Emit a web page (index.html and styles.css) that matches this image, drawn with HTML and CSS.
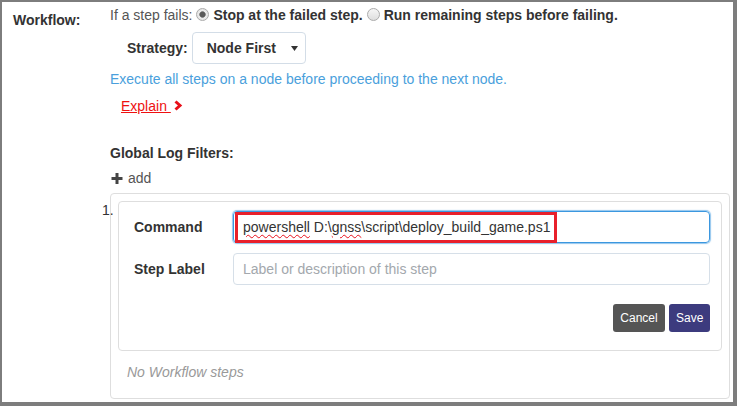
FILE: index.html
```html
<!DOCTYPE html>
<html lang="en">
<head>
<meta charset="utf-8">
<title>Workflow</title>
<link rel="stylesheet" href="styles.css">
</head>
<body>
<div class="frame">
  <div class="form-row">
    <div class="label-col"><span class="ctrl-label">Workflow:</span></div>
    <div class="content-col">
      <div class="fail-line">If a step fails: <span class="radio checked"></span><b>Stop at the failed step.</b> <span class="radio"></span><b>Run remaining steps before failing.</b></div>
      <div class="strategy">
        <span class="strategy-label">Strategy:</span>
        <div class="select">
          <span>Node First</span>
          <svg class="caret" width="7" height="5" viewBox="0 0 7 5"><path d="M0 0H7L3.5 5Z" fill="#333"/></svg>
        </div>
      </div>
      <p class="info">Execute all steps on a node before proceeding to the next node.</p>
      <p class="explain"><a href="#" class="explain-link">Explain </a><svg class="chev" width="10" height="11" viewBox="0 0 10 11"><path d="M2.5 1.5L7 5.5L2.5 9.5" fill="none" stroke="#e8101a" stroke-width="3"/></svg></p>
      <h4 class="glf">Global Log Filters:</h4>
      <div class="add"><svg class="plus" width="12" height="11" viewBox="0 0 12 11"><rect x="4.5" y="0" width="3" height="11" fill="#444"/><rect x="0.5" y="4" width="11" height="3" fill="#444"/></svg><span>add</span></div>
      <div class="wf-box">
        <ol class="steps">
          <li class="step">
            <span class="num">1.</span>
            <div class="edit-box">
              <div class="field-row">
                <span class="field-label">Command</span>
                <div class="input-wrap">
                  <div class="input focused"><span class="misspelled">powershell</span> D:\<span class="misspelled">gnss</span>\script\deploy_build_game.ps1</div>
                  <div class="highlight"></div>
                </div>
              </div>
              <div class="field-row second">
                <span class="field-label">Step Label</span>
                <div class="input-wrap">
                  <div class="input placeholder">Label or description of this step</div>
                </div>
              </div>
              <div class="btn-row">
                <button class="btn btn-cancel">Cancel</button>
                <button class="btn btn-save">Save</button>
              </div>
            </div>
          </li>
        </ol>
        <p class="empty">No Workflow steps</p>
      </div>
    </div>
  </div>
</div>
</body>
</html>
```

FILE: styles.css
```css
* { box-sizing: border-box; }

body {
  margin: 0;
  font-family: "Liberation Sans", Arial, sans-serif;
  font-size: 14px;
  line-height: 20px;
  color: #333;
  background: #fff;
}

.frame {
  width: 737px;
  height: 406px;
  border-style: solid;
  border-color: #7d7d7d;
  border-width: 2px 4px 4px 2px;
  overflow: hidden;
  background: #fff;
}

.form-row {
  display: flex;
}

.label-col {
  width: 108px;
  flex: none;
  padding: 8px 0 0 11px;
}

.ctrl-label {
  font-weight: bold;
  color: #333;
}

.content-col {
  padding-top: 3px;
  width: 620px;
}

.fail-line {
  color: #555;
  white-space: nowrap;
}

.fail-line b {
  color: #333;
}

.radio {
  display: inline-block;
  width: 13px;
  height: 13px;
  border-radius: 50%;
  border: 1px solid #ababab;
  background: linear-gradient(#f6f6f6, #dedede);
  vertical-align: -1px;
  margin-right: 4px;
}

.radio.checked {
  background: radial-gradient(circle, #5a5a5a 0 2.4px, #8c8c8c 3px, #ececec 3.6px, #dcdcdc 100%);
}

.strategy {
  display: flex;
  align-items: center;
  gap: 4px;
  margin-top: 7px;
  padding-left: 17px;
}

.strategy-label {
  font-weight: bold;
}

.select {
  width: 114px;
  height: 32px;
  border: 1px solid #d3dde7;
  border-radius: 4px;
  display: flex;
  align-items: center;
  justify-content: space-between;
  padding: 0 7px 0 14px;
  font-weight: bold;
}

.caret {
  display: block;
}

.info {
  margin: 5px 0 0;
  color: #4a9fdc;
}

.explain {
  margin: 7px 0 0;
  padding-left: 11px;
  display: flex;
  align-items: center;
}

.explain-link {
  color: #ee1111;
  text-decoration: underline;
  white-space: pre;
}

.chev {
  display: block;
  margin-left: 2px;
  margin-top: -1px;
}

.glf {
  margin: 27px 0 0;
  font-size: 14px;
  line-height: 20px;
  font-weight: bold;
}

.add {
  margin-top: 5px;
  display: flex;
  align-items: center;
  color: #555;
}

.plus {
  display: block;
  margin: 0 5px 0 1px;
}

.wf-box {
  margin-top: 5px;
  width: 620px;
  height: 206px;
  border: 1px solid #dedede;
  border-radius: 4px;
  padding: 7px;
}

.steps {
  list-style: none;
  margin: 0;
  padding: 0;
}

.step {
  display: flex;
  align-items: flex-start;
}

.num {
  margin-left: -16px;
  width: 16px;
  flex: none;
  line-height: 19px;
  color: #333;
}

.edit-box {
  flex: 1;
  height: 150px;
  border: 1px solid #dedede;
  border-radius: 4px;
  padding: 9px 11px 18px 15px;
}

.field-row {
  display: flex;
  align-items: center;
}

.field-row.second {
  margin-top: 10px;
}

.field-label {
  width: 99px;
  flex: none;
  font-weight: bold;
}

.input-wrap {
  flex: 1;
  position: relative;
}

.input {
  height: 32px;
  border: 1px solid #d6dfe8;
  border-radius: 4px;
  padding: 5px 9px;
  color: #333;
  white-space: nowrap;
}

.input.focused {
  border-color: #3b97df;
  box-shadow: 0 0 1px 1px rgba(59, 151, 223, 0.55);
}

.input.placeholder {
  color: #a3a8ad;
}

.misspelled {
  text-decoration: underline wavy #e8101a;
  text-decoration-thickness: 1px;
  text-underline-offset: 2px;
}

.highlight {
  position: absolute;
  left: 2px;
  top: 1px;
  width: 322px;
  height: 31px;
  border: 3px solid #e8202b;
  pointer-events: none;
}

.btn-row {
  display: flex;
  justify-content: flex-end;
  gap: 4px;
  margin-top: 19px;
}

.btn {
  height: 28px;
  border: none;
  border-radius: 3px;
  padding: 0 7px;
  font-family: "Liberation Sans", Arial, sans-serif;
  font-size: 12px;
  color: #fff;
  cursor: pointer;
}

.btn-cancel {
  background: #555;
  width: 52px;
}

.btn-save {
  background: #3c3b7e;
  width: 41px;
}

.empty {
  margin: 11px 0 0 9px;
  font-style: italic;
  color: #999;
}
```
